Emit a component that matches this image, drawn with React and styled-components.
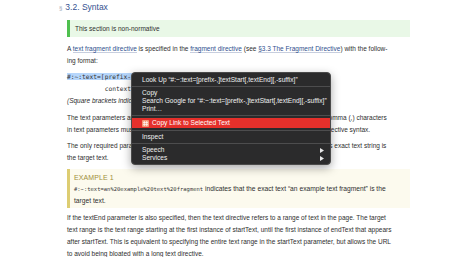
import React from "react";
import styled, { createGlobalStyle } from "styled-components";

const Global = createGlobalStyle`
  html, body { margin: 0; padding: 0; background: #fff; }
  body { font-family: "Liberation Sans", Arial, sans-serif; }
`;

const Page = styled.div`
  position: relative;
  width: 476px;
  height: 257px;
  overflow: hidden;
  box-sizing: border-box;
  padding: 1px 66px 0 67px;
  font-size: 6.5px;
  line-height: 12px;
  color: #2e2e2e;
`;

const Heading = styled.h3`
  margin: 0 0 6px -8px;
  font-size: 8.5px;
  font-weight: normal;
  line-height: 12px;
  color: #34508f;
  white-space: nowrap;
`;

const Sec = styled.span`
  color: #a0a8b8;
  font-size: 6px;
  margin-right: 3px;
`;

const Callout = styled.div`
  display: flex;
  flex-direction: column;
  justify-content: center;
  box-sizing: border-box;
  min-height: ${(p) => p.$h || "auto"};
  padding: ${(p) => p.$pad || "0 0 0 5px"};
  margin: 0 0 ${(p) => p.$mb || "6px"};
  background: ${(p) => p.$bg};
  border-left: 3px solid ${(p) => p.$border};
  line-height: ${(p) => p.$lh || "12px"};
`;

const Para = styled.p`
  margin: 0 0 ${(p) => p.$mb || "4px"};
  white-space: nowrap;
  font-size: ${(p) => p.$fs || "inherit"};
  font-style: ${(p) => (p.$italic ? "italic" : "normal")};
`;

const Link = styled.a`
  color: #2f4f8e;
  text-decoration: none;
  border-bottom: 1px solid #c7cede;
`;

const Code = styled.pre`
  margin: 4px 0 0;
  font-family: "DejaVu Sans Mono", "Liberation Mono", monospace;
  font-size: 6.25px;
  line-height: 12px;
  color: #333;
`;

const Sel = styled.span`
  background: #b6d6fb;
`;

const ExLabel = styled.div`
  color: #a08f3a;
  font-size: 7px;
  letter-spacing: 0.1px;
`;

const Mono = styled.span`
  font-family: "DejaVu Sans Mono", "Liberation Mono", monospace;
  font-size: 5.5px;
  color: #3a3a3a;
`;

const Menu = styled.div`
  position: absolute;
  left: 131px;
  top: 72px;
  width: 200px;
  box-sizing: border-box;
  padding: 3px 0 2px;
  background: #2b2b2c;
  border: 0.5px solid #4a4a4a;
  border-radius: 4px;
  box-shadow: 0 3px 10px rgba(0, 0, 0, 0.35);
  font-size: 6.6px;
  color: #f0f0f0;
  overflow: hidden;
`;

const Item = styled.div`
  display: flex;
  align-items: center;
  justify-content: space-between;
  gap: 3px;
  height: ${(p) => (p.$active ? "10px" : "8px")};
  padding: 0 6px 0 10px;
  background: ${(p) => (p.$active ? "#e5302b" : "transparent")};
  color: ${(p) => (p.$active ? "#fff" : "#f0f0f0")};
  white-space: nowrap;
`;

const Label = styled.span`
  display: flex;
  align-items: center;
  gap: 3px;
`;

const Sep = styled.div`
  height: 1px;
  margin: 2px 0;
  background: #4d4d4e;
`;

const LinkIcon = () => (
  <svg width="7" height="7" viewBox="0 0 7 7">
    <rect x="0" y="0" width="7" height="7" rx="1" fill="#f39a78" />
    <path d="M2.3 1v5M4.7 1v5M1 2.6h5M1 4.6h5" stroke="#fff" strokeWidth="0.7" />
  </svg>
);

const Arrow = () => (
  <svg width="4" height="5" viewBox="0 0 4 5">
    <path d="M0 0L4 2.5L0 5Z" fill="#e8e8e8" />
  </svg>
);

export default function App() {
  return (
    <>
      <Global />
      <Page>
        <Heading>
          <Sec>§</Sec>3.2. Syntax
        </Heading>

        <Callout $bg="#e9f8e7" $border="#4fc04f" $h="17px">
          This section is non-normative
        </Callout>

        <Para>
          A <Link>text fragment directive</Link> is specified in the{" "}
          <Link>fragment directive</Link> (see <Link>§3.3 The Fragment Directive</Link>) with the follow-
          <br />
          ing format:
        </Para>

        <Code>
          <Sel>#:~:text=[prefix-,]textStart[,textEnd][,-suffix]</Sel>
          {"\n          context  |-------match-----|  context"}
        </Code>

        <Para $italic $mb="5px">(Square brackets indicate an optional parameter)</Para>

        <Para>
          The text parameters are percent-decoded before matching. Dash (-), ampersand (&amp;), and comma (,) characters
          <br />
          in text parameters must be percent-encoded to avoid being interpreted as part of the text directive syntax.
        </Para>

        <Para $mb="5px">
          The only required parameter is textStart. If only textStart is specified, the first instance of this exact text string is
          <br />
          the target text.
        </Para>

        <Callout $bg="#fcfaee" $border="#ddcd72" $pad="3px 0 2px 4px" $lh="11px" $mb="4px">
          <ExLabel>EXAMPLE 1</ExLabel>
          <Para $mb="0" $fs="6.7px">
            <Mono>#:~:text=an%20example%20text%20fragment</Mono> indicates that the exact text “an example text fragment” is the
            <br />
            target text.
          </Para>
        </Callout>

        <Para>
          If the textEnd parameter is also specified, then the text directive refers to a range of text in the page. The target
          <br />
          text range is the text range starting at the first instance of startText, until the first instance of endText that appears
          <br />
          after startText. This is equivalent to specifying the entire text range in the startText parameter, but allows the URL
          <br />
          to avoid being bloated with a long text directive.
        </Para>

        <Menu>
          <Item>Look Up “#:~:text=[prefix-,]textStart[,textEnd][,-suffix]”</Item>
          <Sep />
          <Item>Copy</Item>
          <Item>Search Google for “#:~:text=[prefix-,]textStart[,textEnd][,-suffix]”</Item>
          <Item>Print…</Item>
          <Sep />
          <Item $active>
            <Label>
              <LinkIcon />
              Copy Link to Selected Text
            </Label>
          </Item>
          <Sep />
          <Item>Inspect</Item>
          <Sep />
          <Item>
            Speech <Arrow />
          </Item>
          <Item>
            Services <Arrow />
          </Item>
        </Menu>
      </Page>
    </>
  );
}
